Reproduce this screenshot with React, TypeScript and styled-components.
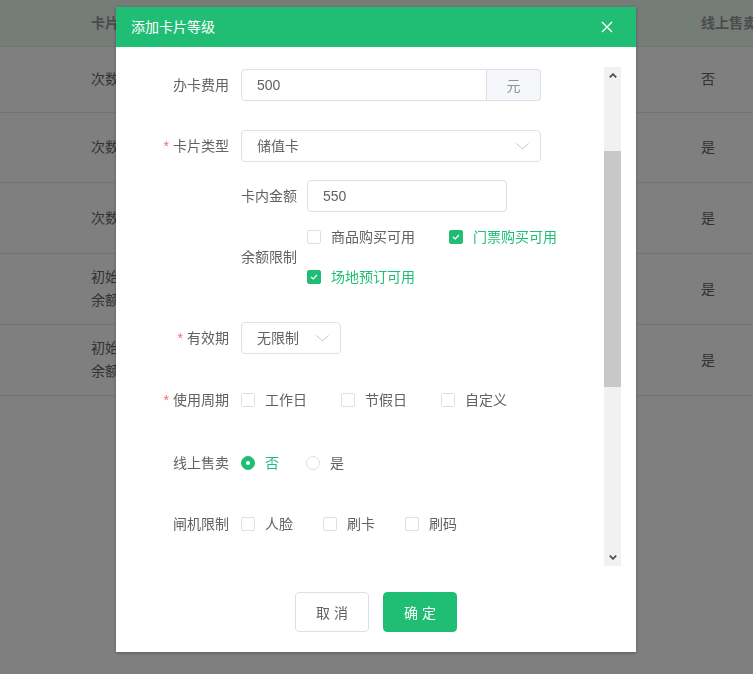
import styled, { createGlobalStyle } from "styled-components";

const GREEN = "#1fbe74";

const GlobalStyle = createGlobalStyle`
  html, body {
    margin: 0;
    padding: 0;
    background: #fff;
  }
  body {
    font-family: "Liberation Sans", "Noto Sans CJK SC", sans-serif;
    font-size: 14px;
    color: #606266;
  }
  * {
    box-sizing: border-box;
  }
`;

const Page = styled.div`
  width: 753px;
  height: 674px;
  overflow: hidden;
`;

const TableRow = styled.div<{ $h: number; $head?: boolean }>`
  display: flex;
  align-items: center;
  height: ${(p) => p.$h}px;
  border-bottom: 1px solid ${(p) => (p.$head ? "#dcefe4" : "#e6e6e6")};
  background: ${(p) => (p.$head ? "#ebfbf2" : "#fff")};
  color: ${(p) => (p.$head ? "#999" : "#666")};
  font-weight: ${(p) => (p.$head ? "bold" : "normal")};
  line-height: 23px;
`;

const NameCell = styled.div`
  width: 701px;
  flex-shrink: 0;
  padding-left: 91px;
  white-space: nowrap;
`;

const SaleCell = styled.div`
  flex: 1;
  white-space: nowrap;
`;

const Mask = styled.div`
  position: fixed;
  inset: 0;
  background: rgba(0, 0, 0, 0.5);
  display: flex;
  justify-content: center;
  align-items: flex-start;
  padding-right: 1px;
`;

const Dialog = styled.div`
  width: 520px;
  margin-top: 7px;
  background: #fff;
  box-shadow: 0 1px 3px rgba(0, 0, 0, 0.3);
  display: flex;
  flex-direction: column;
`;

const DialogHeader = styled.div`
  height: 40px;
  background: ${GREEN};
  color: #fff;
  display: flex;
  align-items: center;
  justify-content: space-between;
  padding: 0 23px 0 15px;
  font-size: 14px;
  line-height: 20px;
`;

const CloseButton = styled.div`
  width: 12px;
  height: 12px;
  display: flex;
`;

const DialogBody = styled.div`
  height: 519px;
  display: flex;
  padding: 20px 15px 0 0;
`;

const FormArea = styled.div`
  flex: 1;
  overflow: hidden;
  padding-top: 2px;
`;

const FormItem = styled.div<{ $mb?: number }>`
  display: flex;
  align-items: center;
  margin-bottom: ${(p) => p.$mb ?? 0}px;
`;

const Label = styled.div`
  width: 125px;
  flex-shrink: 0;
  padding-right: 12px;
  text-align: right;
  line-height: 32px;
  color: #606266;
`;

const Star = styled.span`
  color: #f56c6c;
  margin-right: 4px;
`;

const SubSection = styled.div<{ $mb?: number }>`
  padding-left: 125px;
  margin-bottom: ${(p) => p.$mb ?? 0}px;
`;

const SubLabel = styled.div`
  width: 66px;
  flex-shrink: 0;
  line-height: 32px;
`;

const InputBox = styled.div<{ $w: number }>`
  width: ${(p) => p.$w}px;
  height: 32px;
  border: 1px solid #dcdfe6;
  border-radius: 4px;
  display: flex;
  align-items: center;
  justify-content: space-between;
  padding: 0 11px 0 15px;
  color: #606266;
  line-height: 20px;
`;

const InputGroup = styled.div`
  width: 300px;
  height: 32px;
  display: flex;
`;

const GroupInput = styled.div`
  flex: 1;
  border: 1px solid #dcdfe6;
  border-radius: 4px 0 0 4px;
  display: flex;
  align-items: center;
  padding-left: 15px;
`;

const Append = styled.div`
  width: 54px;
  background: #f5f7fa;
  border: 1px solid #dcdfe6;
  border-left: 0;
  border-radius: 0 4px 4px 0;
  color: #909399;
  display: flex;
  align-items: center;
  justify-content: center;
`;

const CheckGroup = styled.div<{ $w?: number }>`
  display: flex;
  flex-wrap: wrap;
  width: ${(p) => (p.$w ? `${p.$w}px` : "auto")};
`;

const Option = styled.label<{ $gap: number; $on?: boolean; $h?: number }>`
  display: flex;
  align-items: center;
  height: ${(p) => p.$h ?? 32}px;
  margin-right: ${(p) => p.$gap}px;
  color: ${(p) => (p.$on ? GREEN : "#606266")};
  line-height: 20px;
  white-space: nowrap;
`;

const Box = styled.span<{ $on?: boolean }>`
  width: 14px;
  height: 14px;
  border: 1px solid ${(p) => (p.$on ? GREEN : "#dcdfe6")};
  background: ${(p) => (p.$on ? GREEN : "#fff")};
  border-radius: 2px;
  margin-right: 10px;
  display: flex;
  align-items: center;
  justify-content: center;
`;

const Circle = styled.span<{ $on?: boolean }>`
  width: 14px;
  height: 14px;
  border-radius: 50%;
  border: 1px solid ${(p) => (p.$on ? GREEN : "#dcdfe6")};
  background: ${(p) => (p.$on ? GREEN : "#fff")};
  margin-right: 10px;
  display: flex;
  align-items: center;
  justify-content: center;
  &::after {
    content: "";
    width: 4px;
    height: 4px;
    border-radius: 50%;
    background: #fff;
    display: ${(p) => (p.$on ? "block" : "none")};
  }
`;

const ScrollBar = styled.div`
  width: 17px;
  flex-shrink: 0;
  background: #f1f1f1;
  display: flex;
  flex-direction: column;
`;

const ScrollArrow = styled.div`
  height: 17px;
  display: flex;
  align-items: center;
  justify-content: center;
`;

const ScrollTrack = styled.div`
  flex: 1;
`;

const ScrollThumb = styled.div`
  margin-top: 67px;
  height: 236px;
  background: #c8c8c8;
`;

const Footer = styled.div`
  display: flex;
  justify-content: center;
  gap: 14px;
  padding: 26px 0 20px;
`;

const Button = styled.div<{ $primary?: boolean }>`
  width: 74px;
  height: 40px;
  border-radius: 4px;
  border: 1px solid ${(p) => (p.$primary ? GREEN : "#dcdfe6")};
  background: ${(p) => (p.$primary ? GREEN : "#fff")};
  color: ${(p) => (p.$primary ? "#fff" : "#606266")};
  display: flex;
  align-items: center;
  justify-content: center;
  font-size: 14px;
  white-space: pre;
`;

const Chevron = () => (
  <svg width="13" height="7" viewBox="0 0 13 7">
    <polyline points="0.5,0.5 6.5,6 12.5,0.5" fill="none" stroke="#c0c4cc" strokeWidth="1" />
  </svg>
);

const Tick = () => (
  <svg width="8" height="6" viewBox="0 0 8 6">
    <polyline points="1,3 3.2,5 7,1" fill="none" stroke="#fff" strokeWidth="1.2" />
  </svg>
);

function Check({ label, on, gap, h }: { label: string; on?: boolean; gap: number; h?: number }) {
  return (
    <Option $gap={gap} $on={on} $h={h}>
      <Box $on={on}>{on && <Tick />}</Box>
      {label}
    </Option>
  );
}

function Radio({ label, on, gap }: { label: string; on?: boolean; gap: number }) {
  return (
    <Option $gap={gap} $on={on}>
      <Circle $on={on} />
      {label}
    </Option>
  );
}

const rows = [
  { h: 66, name: ["次数卡：10次"], sale: "否" },
  { h: 70, name: ["次数卡：20次"], sale: "是" },
  { h: 71, name: ["次数卡：30次"], sale: "是" },
  { h: 71, name: ["初始金额：500元", "余额限制：门票购买可用"], sale: "是" },
  { h: 71, name: ["初始金额：1000元", "余额限制：场地预订可用"], sale: "是" },
];

export default function App() {
  return (
    <>
      <GlobalStyle />
      <Page>
        <TableRow $h={47} $head>
          <NameCell>卡片信息</NameCell>
          <SaleCell>线上售卖</SaleCell>
        </TableRow>
        {rows.map((r, i) => (
          <TableRow $h={r.h} key={i}>
            <NameCell>
              {r.name.map((n) => (
                <div key={n}>{n}</div>
              ))}
            </NameCell>
            <SaleCell>{r.sale}</SaleCell>
          </TableRow>
        ))}
      </Page>

      <Mask>
        <Dialog>
          <DialogHeader>
            <span>添加卡片等级</span>
            <CloseButton>
              <svg width="12" height="12" viewBox="0 0 12 12">
                <path d="M1 1 L11 11 M11 1 L1 11" stroke="#fff" strokeWidth="1.4" />
              </svg>
            </CloseButton>
          </DialogHeader>

          <DialogBody>
            <FormArea>
              <FormItem $mb={29}>
                <Label>办卡费用</Label>
                <InputGroup>
                  <GroupInput>500</GroupInput>
                  <Append>元</Append>
                </InputGroup>
              </FormItem>

              <FormItem $mb={18}>
                <Label>
                  <Star>*</Star>卡片类型
                </Label>
                <InputBox $w={300}>
                  储值卡
                  <Chevron />
                </InputBox>
              </FormItem>

              <SubSection $mb={25}>
                <FormItem $mb={5}>
                  <SubLabel>卡内金额</SubLabel>
                  <InputBox $w={200}>550</InputBox>
                </FormItem>
                <FormItem>
                  <SubLabel>余额限制</SubLabel>
                  <CheckGroup $w={297}>
                    <Check label="商品购买可用" gap={34} h={40} />
                    <Check label="门票购买可用" on gap={34} h={40} />
                    <Check label="场地预订可用" on gap={34} h={40} />
                  </CheckGroup>
                </FormItem>
              </SubSection>

              <FormItem $mb={30}>
                <Label>
                  <Star>*</Star>有效期
                </Label>
                <InputBox $w={100}>
                  无限制
                  <Chevron />
                </InputBox>
              </FormItem>

              <FormItem $mb={31}>
                <Label>
                  <Star>*</Star>使用周期
                </Label>
                <CheckGroup>
                  <Check label="工作日" gap={34} />
                  <Check label="节假日" gap={34} />
                  <Check label="自定义" gap={34} />
                </CheckGroup>
              </FormItem>

              <FormItem $mb={29}>
                <Label>线上售卖</Label>
                <CheckGroup>
                  <Radio label="否" on gap={27} />
                  <Radio label="是" gap={27} />
                </CheckGroup>
              </FormItem>

              <FormItem>
                <Label>闸机限制</Label>
                <CheckGroup>
                  <Check label="人脸" gap={30} />
                  <Check label="刷卡" gap={30} />
                  <Check label="刷码" gap={30} />
                </CheckGroup>
              </FormItem>
            </FormArea>

            <ScrollBar>
              <ScrollArrow>
                <svg width="8" height="5" viewBox="0 0 8 5">
                  <polyline points="0.8,4.4 4,1.2 7.2,4.4" fill="none" stroke="#505050" strokeWidth="1.8" />
                </svg>
              </ScrollArrow>
              <ScrollTrack>
                <ScrollThumb />
              </ScrollTrack>
              <ScrollArrow>
                <svg width="8" height="5" viewBox="0 0 8 5">
                  <polyline points="0.8,0.6 4,3.8 7.2,0.6" fill="none" stroke="#505050" strokeWidth="1.8" />
                </svg>
              </ScrollArrow>
            </ScrollBar>
          </DialogBody>

          <Footer>
            <Button>取 消</Button>
            <Button $primary>确 定</Button>
          </Footer>
        </Dialog>
      </Mask>
    </>
  );
}
